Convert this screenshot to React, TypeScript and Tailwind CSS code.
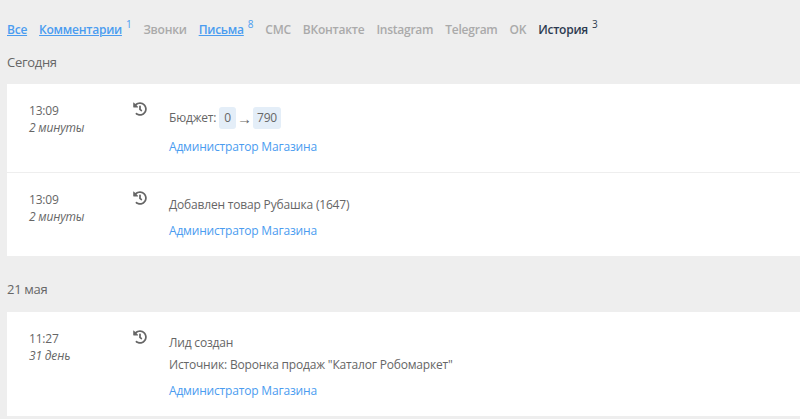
import React from 'react';
import { FaHistory } from 'react-icons/fa';

const tabs = [
  { label: 'Все', link: true },
  { label: 'Комментарии', link: true, count: 1 },
  { label: 'Звонки' },
  { label: 'Письма', link: true, count: 8 },
  { label: 'СМС' },
  { label: 'ВКонтакте' },
  { label: 'Instagram' },
  { label: 'Telegram' },
  { label: 'OK' },
  { label: 'История', active: true, count: 3 },
];

const Author = () => (
  <div className="mt-[8px] h-[20px] leading-[20px] text-[#4a9cf0]">Администратор Магазина</div>
);

const Row: React.FC<{
  time: string;
  ago: string;
  className: string;
  children: React.ReactNode;
}> = ({ time, ago, className, children }) => (
  <div className={`flex pl-[22px] ${className}`}>
    <div className="w-[104px] shrink-0 pt-[18px]">
      <div className="h-[18px] leading-[18px] text-[#666]">{time}</div>
      <div className="h-[16px] leading-[16px] italic text-[#666]">{ago}</div>
    </div>
    <div className="w-[36px] shrink-0 pt-[18px]">
      <FaHistory size={14} className="text-[#666]" />
    </div>
    <div>{children}</div>
  </div>
);

export default function App() {
  return (
    <div className="h-[419px] w-[800px] overflow-hidden bg-[#eeeeee] font-['Open_Sans',sans-serif] text-[12px] tracking-[-0.18px] text-[#666]">
      <div className="flex gap-[12px] pl-[7px] pt-[20px] h-[52px] font-semibold tracking-[-0.24px]">
        {tabs.map((t) => (
          <div
            key={t.label}
            className={`flex items-start leading-[20px] ${
              t.link ? 'text-[#4a9cf0]' : t.active ? 'text-[#2c3a50]' : 'text-[#aaaaaa]'
            }`}
          >
            <span className={t.link ? 'underline' : ''}>{t.label}</span>
            {t.count && (
              <span className="ml-[4px] -mt-[3px] text-[10px] font-normal leading-[14px]">{t.count}</span>
            )}
          </div>
        ))}
      </div>

      <div className="pl-[7px] h-[32px] text-[13px] tracking-[-0.3px] leading-[20px] text-[#666]">Сегодня</div>
      <div className="ml-[7px] bg-white">
        <Row time="13:09" ago="2 минуты" className="h-[89px] border-b border-[#eeeeee]">
          <div className="flex items-center pt-[23px] h-[45px]">
            <span>Бюджет:</span>
            <span className="ml-[3px] rounded-[3px] bg-[#e4eef8] px-[5px] h-[22px] leading-[22px]">0</span>
            <span className="w-[17px] pt-[1px] text-center font-['Liberation_Sans',sans-serif] text-[15px] leading-[22px] text-[#666]">→</span>
            <span className="rounded-[3px] bg-[#e4eef8] px-[4px] h-[22px] leading-[22px]">790</span>
          </div>
          <Author />
        </Row>
        <Row time="13:09" ago="2 минуты" className="h-[83px]">
          <div className="pt-[22px] h-[40px] leading-[20px]">Добавлен товар Рубашка (1647)</div>
          <Author />
        </Row>
      </div>

      <div className="pl-[7px] pt-[23px] h-[56px] text-[13px] tracking-[-0.3px] leading-[20px] text-[#666]">21 мая</div>
      <div className="ml-[7px] bg-white">
        <Row time="11:27" ago="31 день" className="h-[104px]">
          <div className="pt-[20px] leading-[21px]">
            <div>Лид создан</div>
            <div className="mt-[1px]">Источник: Воронка продаж "Каталог Робомаркет"</div>
          </div>
          <div className="-mt-[2px]">
            <Author />
          </div>
        </Row>
      </div>
    </div>
  );
}
